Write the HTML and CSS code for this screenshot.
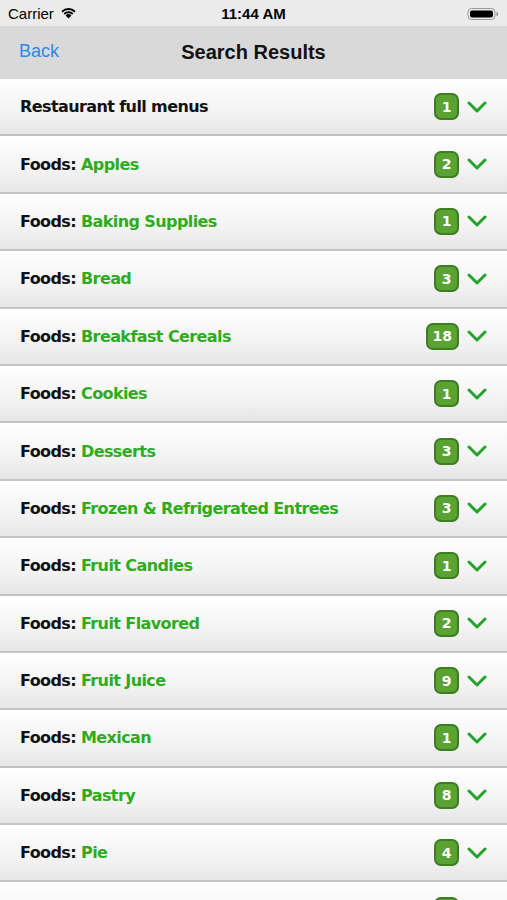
FILE: index.html
```html
<!DOCTYPE html>
<html lang="en">
<head>
    <meta charset="UTF-8">
    <meta name="viewport" content="width=device-width, initial-scale=1.0">
    <title>Search Results</title>
    <link rel="stylesheet" href="styles.css">
</head>
<body>
    <div class="status-bar">
        <div class="status-left">
            <span>Carrier</span>
            <svg class="wifi" width="17" height="12" viewBox="0 0 17 12">
                <path d="M8.5 11.5 L5.6 8.4 A4.2 4.2 0 0 1 11.4 8.4 Z" fill="#000"/>
                <path d="M3.6 6.3 A7 7 0 0 1 13.4 6.3 L12.1 7.7 A5.2 5.2 0 0 0 4.9 7.7 Z" fill="#000"/>
                <path d="M1.4 4 A10.2 10.2 0 0 1 15.6 4 L14.3 5.4 A8.3 8.3 0 0 0 2.7 5.4 Z" fill="#000"/>
            </svg>
        </div>
        <div class="status-time">11:44 AM</div>
        <div class="status-right">
            <svg width="32" height="14" viewBox="0 0 32 14">
                <rect x="1" y="1.5" width="27" height="11" rx="3.5" fill="none" stroke="#999" stroke-width="1"/>
                <rect x="3" y="3.5" width="23" height="7" rx="2" fill="#000"/>
                <rect x="29.3" y="5" width="1.7" height="4" rx="0.8" fill="#999"/>
            </svg>
        </div>
    </div>

    <div class="nav-bar">
        <a class="nav-back" href="#">Back</a>
        <h1 class="nav-title">Search Results</h1>
    </div>

    <ul class="results">
        <li class="row">
            <span class="label">Restaurant full menus</span>
            <span class="count">1</span>
            <svg class="chevron" viewBox="0 0 20 12"><path d="M2 2 L10 10 L18 2"/></svg>
        </li>
        <li class="row">
            <span class="label">Foods: <em>Apples</em></span>
            <span class="count">2</span>
            <svg class="chevron" viewBox="0 0 20 12"><path d="M2 2 L10 10 L18 2"/></svg>
        </li>
        <li class="row">
            <span class="label">Foods: <em>Baking Supplies</em></span>
            <span class="count">1</span>
            <svg class="chevron" viewBox="0 0 20 12"><path d="M2 2 L10 10 L18 2"/></svg>
        </li>
        <li class="row">
            <span class="label">Foods: <em>Bread</em></span>
            <span class="count">3</span>
            <svg class="chevron" viewBox="0 0 20 12"><path d="M2 2 L10 10 L18 2"/></svg>
        </li>
        <li class="row">
            <span class="label">Foods: <em>Breakfast Cereals</em></span>
            <span class="count">18</span>
            <svg class="chevron" viewBox="0 0 20 12"><path d="M2 2 L10 10 L18 2"/></svg>
        </li>
        <li class="row">
            <span class="label">Foods: <em>Cookies</em></span>
            <span class="count">1</span>
            <svg class="chevron" viewBox="0 0 20 12"><path d="M2 2 L10 10 L18 2"/></svg>
        </li>
        <li class="row">
            <span class="label">Foods: <em>Desserts</em></span>
            <span class="count">3</span>
            <svg class="chevron" viewBox="0 0 20 12"><path d="M2 2 L10 10 L18 2"/></svg>
        </li>
        <li class="row">
            <span class="label">Foods: <em>Frozen &amp; Refrigerated Entrees</em></span>
            <span class="count">3</span>
            <svg class="chevron" viewBox="0 0 20 12"><path d="M2 2 L10 10 L18 2"/></svg>
        </li>
        <li class="row">
            <span class="label">Foods: <em>Fruit Candies</em></span>
            <span class="count">1</span>
            <svg class="chevron" viewBox="0 0 20 12"><path d="M2 2 L10 10 L18 2"/></svg>
        </li>
        <li class="row">
            <span class="label">Foods: <em>Fruit Flavored</em></span>
            <span class="count">2</span>
            <svg class="chevron" viewBox="0 0 20 12"><path d="M2 2 L10 10 L18 2"/></svg>
        </li>
        <li class="row">
            <span class="label">Foods: <em>Fruit Juice</em></span>
            <span class="count">9</span>
            <svg class="chevron" viewBox="0 0 20 12"><path d="M2 2 L10 10 L18 2"/></svg>
        </li>
        <li class="row">
            <span class="label">Foods: <em>Mexican</em></span>
            <span class="count">1</span>
            <svg class="chevron" viewBox="0 0 20 12"><path d="M2 2 L10 10 L18 2"/></svg>
        </li>
        <li class="row">
            <span class="label">Foods: <em>Pastry</em></span>
            <span class="count">8</span>
            <svg class="chevron" viewBox="0 0 20 12"><path d="M2 2 L10 10 L18 2"/></svg>
        </li>
        <li class="row">
            <span class="label">Foods: <em>Pie</em></span>
            <span class="count">4</span>
            <svg class="chevron" viewBox="0 0 20 12"><path d="M2 2 L10 10 L18 2"/></svg>
        </li>
        <li class="row row-partial">
            <span class="count">1</span>
            <svg class="chevron" viewBox="0 0 20 12"><path d="M2 2 L10 10 L18 2"/></svg>
        </li>
    </ul>
</body>
</html>
```

FILE: styles.css
```css
body {
    margin: 0;
    padding: 0;
    background-color: #fff;
    font-family: "Liberation Sans", Arial, sans-serif;
    width: 507px;
    height: 900px;
    overflow: hidden;
}

.status-bar {
    height: 26px;
    background-color: #ebebeb;
    display: grid;
    grid-template-columns: 1fr auto 1fr;
    align-items: center;
    padding: 0 8px;
    font-size: 15px;
    color: #000;
}

.status-left {
    display: flex;
    align-items: center;
    gap: 6px;
}

.status-time {
    font-weight: bold;
    font-size: 15px;
}

.status-right {
    display: flex;
    justify-content: flex-end;
    padding-top: 1px;
}

.nav-bar {
    height: 53px;
    background-color: #d9d9d9;
    display: flex;
    align-items: center;
    justify-content: center;
    position: relative;
}

.nav-back {
    position: absolute;
    left: 19px;
    top: 15px;
    color: #2e88e8;
    text-decoration: none;
    font-size: 18px;
}

.nav-title {
    margin: 0;
    font-size: 20px;
    font-weight: bold;
    color: #111;
}

.results {
    list-style: none;
    margin: 0;
    padding: 0;
}

.row {
    box-sizing: border-box;
    height: 57.4px;
    display: flex;
    align-items: center;
    padding: 0 20px 0 20px;
    background: linear-gradient(to bottom, #ffffff 0%, #f3f3f3 60%, #e6e6e6 100%);
    border-bottom: 2px solid #c4c4c4;
}

.row-partial {
    justify-content: flex-end;
}

.label {
    flex: 1;
    font-family: "DejaVu Sans", Verdana, sans-serif;
    font-weight: bold;
    font-size: 16px;
    letter-spacing: -0.6px;
    color: #111;
}

.label em {
    font-style: normal;
    color: #2eac1e;
}

.count {
    box-sizing: border-box;
    min-width: 25px;
    height: 27px;
    padding: 0 5px;
    border: 2px solid #3b7d1f;
    border-radius: 7px;
    background-color: #5aa232;
    color: #fff;
    font-family: "DejaVu Sans", Verdana, sans-serif;
    font-weight: bold;
    font-size: 14px;
    display: flex;
    align-items: center;
    justify-content: center;
}

.chevron {
    width: 20px;
    height: 12px;
    margin-left: 8px;
    fill: none;
    stroke: #22a32a;
    stroke-width: 3;
    stroke-linecap: round;
    stroke-linejoin: round;
}
```
